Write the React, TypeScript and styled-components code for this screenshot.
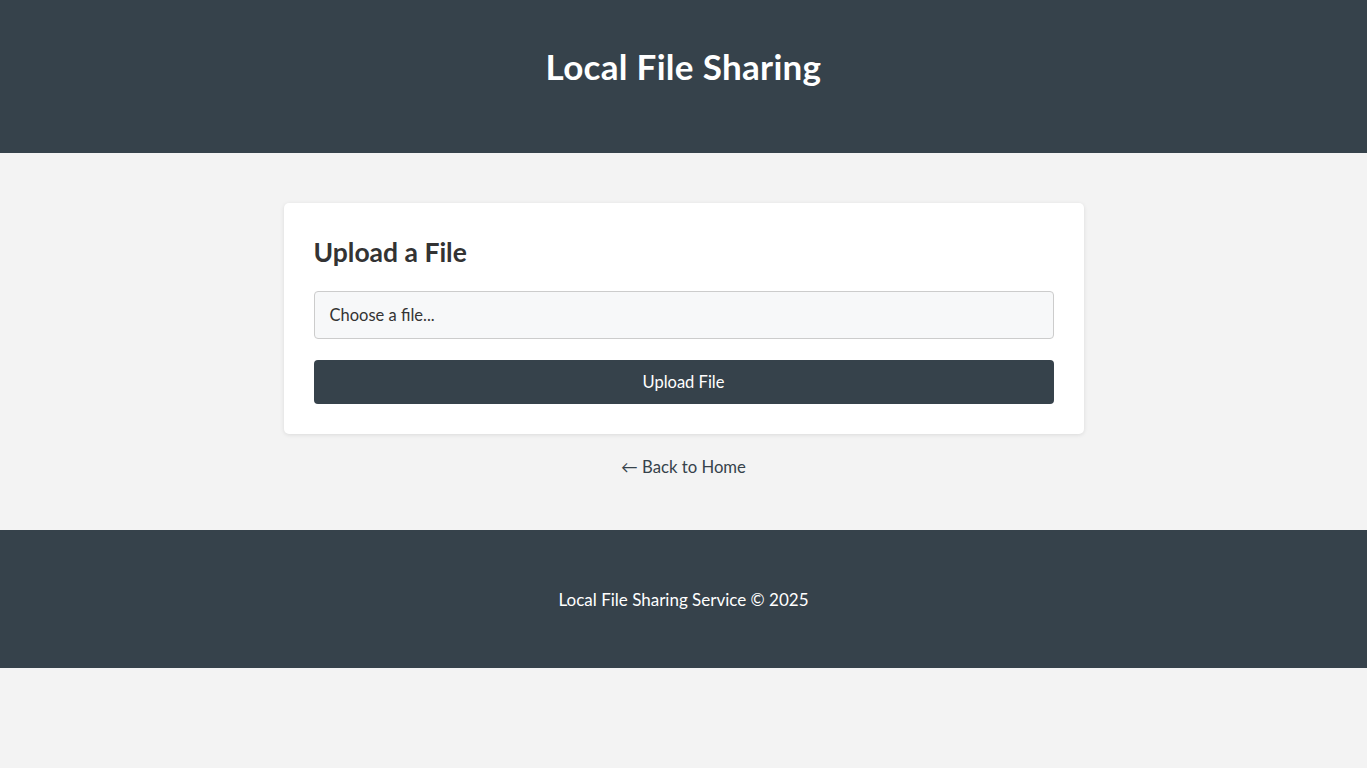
import React from "react";
import styled, { createGlobalStyle } from "styled-components";

const Global = createGlobalStyle`
  html, body { margin: 0; padding: 0; background: #f3f3f3; }
  body { font-family: "Lato", "Noto Sans", sans-serif; color: #333; }
  * { box-sizing: border-box; }
`;

const Header = styled.header`
  background: #36424b;
  height: 153px;
  display: flex;
  align-items: center;
  justify-content: center;
  padding-bottom: 22px;
`;

const Title = styled.h1`
  margin: 0;
  color: #fff;
  font-size: 35px;
  font-weight: 700;
  letter-spacing: 0.3px;
`;

const Main = styled.main`
  display: flex;
  flex-direction: column;
  align-items: center;
  padding: 50px 0 53px;
`;

const Card = styled.section`
  width: 800px;
  background: #fff;
  border-radius: 5px;
  box-shadow: 0 1px 4px rgba(0, 0, 0, 0.1);
  padding: 30px;
  display: flex;
  flex-direction: column;
`;

const CardTitle = styled.h2`
  margin: 4px 0 24px;
  font-size: 26.5px;
  font-weight: 700;
  color: #333;
  line-height: 30px;
`;

const FileBox = styled.label`
  height: 48px;
  border: 1px solid #ccc;
  border-radius: 4px;
  background: #f7f8f9;
  display: flex;
  align-items: center;
  padding: 0 15px;
  font-size: 16.5px;
  color: #333;
  margin-bottom: 21px;
`;

const Button = styled.button`
  height: 44px;
  border: none;
  border-radius: 4px;
  background: #36424b;
  color: #fff;
  font-family: inherit;
  font-size: 16.5px;
  cursor: pointer;
`;

const BackLink = styled.a`
  margin-top: 23px;
  color: #36424b;
  font-size: 16.7px;
  text-decoration: none;
  line-height: 20px;
`;

const Footer = styled.footer`
  background: #36424b;
  height: 138px;
  display: flex;
  align-items: center;
  justify-content: center;
  color: #fff;
  font-size: 17px;
`;

export default function App() {
  return (
    <>
      <Global />
      <Header>
        <Title>Local File Sharing</Title>
      </Header>
      <Main>
        <Card>
          <CardTitle>Upload a File</CardTitle>
          <FileBox>Choose a file...</FileBox>
          <Button>Upload File</Button>
        </Card>
        <BackLink href="#">← Back to Home</BackLink>
      </Main>
      <Footer>Local File Sharing Service © 2025</Footer>
    </>
  );
}
